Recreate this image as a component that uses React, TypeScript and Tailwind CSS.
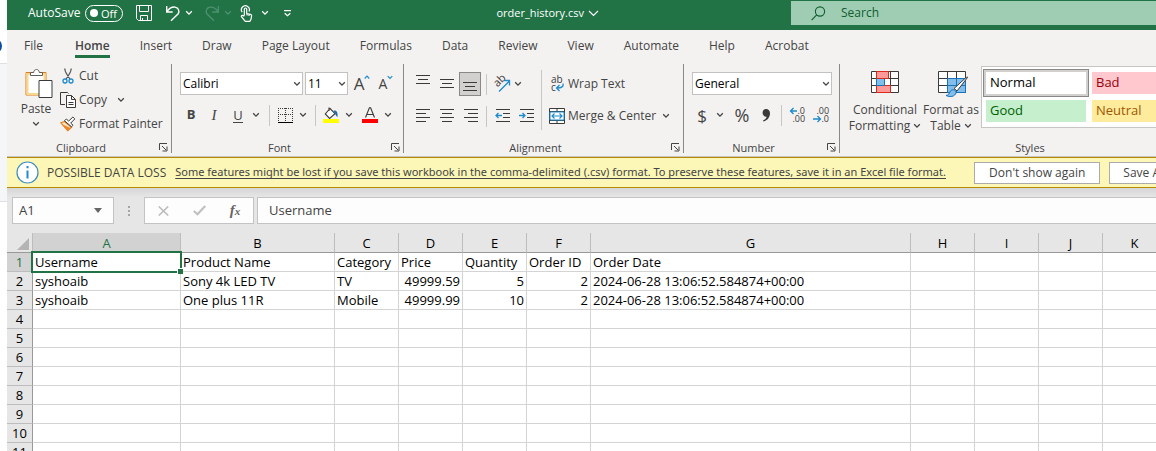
import React from "react";

const tabs = ["File", "Home", "Insert", "Draw", "Page Layout", "Formulas", "Data", "Review", "View", "Automate", "Help", "Acrobat"];

const columns = [
  { name: "A", width: "w-[148px]" },
  { name: "B", width: "w-[154px]" },
  { name: "C", width: "w-16" },
  { name: "D", width: "w-16" },
  { name: "E", width: "w-16" },
  { name: "F", width: "w-16" },
  { name: "G", width: "w-80" },
  { name: "H", width: "w-16" },
  { name: "I", width: "w-16" },
  { name: "J", width: "w-16" },
  { name: "K", width: "w-16" },
];

const data: string[][] = [
  ["Username", "Product Name", "Category", "Price", "Quantity", "Order ID", "Order Date"],
  ["syshoaib", "Sony 4k LED TV", "TV", "49999.59", "5", "2", "2024-06-28 13:06:52.584874+00:00"],
  ["syshoaib", "One plus 11R", "Mobile", "49999.99", "10", "2", "2024-06-28 13:06:52.584874+00:00"],
];

const rowNumbers = [1, 2, 3, 4, 5, 6, 7, 8, 9, 10, 11];

function Chevron({ className = "" }: { className?: string }) {
  return (
    <svg className={`shrink-0 ${className}`} width="8" height="6" viewBox="0 0 8 6" fill="none" stroke="currentColor" strokeWidth="1.3" aria-hidden="true">
      <path d="M1.2 1.3 4 4.1 6.8 1.3" />
    </svg>
  );
}

function DropButton({ label, className = "w-4" }: { label: string; className?: string }) {
  return (
    <button type="button" aria-label={label} className={`flex h-6 shrink-0 items-center justify-center ${className}`}>
      <Chevron />
    </button>
  );
}

function IconButton({ label, className = "w-6", children }: { label: string; className?: string; children: React.ReactNode }) {
  return (
    <button type="button" aria-label={label} className={`flex h-6 shrink-0 items-center justify-center ${className}`}>
      {children}
    </button>
  );
}

function Divider({ className = "h-[21px]" }: { className?: string }) {
  return <span className={`w-px shrink-0 bg-[#c8c6c4] ${className}`} />;
}

function Launcher({ label }: { label: string }) {
  return (
    <button type="button" aria-label={label} className="absolute right-[3px] bottom-px flex">
      <svg width="9" height="9" viewBox="0 0 9 9" fill="none" stroke="#444" aria-hidden="true">
        <path d="M.5 7V.5H8M3 3l4 4M8 3.5v4.5H3.5" />
      </svg>
    </button>
  );
}

function Group({ name, launcher = true, className, children }: { name: string; launcher?: boolean; className: string; children: React.ReactNode }) {
  return (
    <section aria-label={name} className={`relative flex h-[89px] shrink-0 flex-col justify-between ${launcher ? "border-r border-[#8a8886]" : ""} ${className}`}>
      {children}
      <h2 className={`text-center text-[11px] leading-[10px] ${launcher ? "pr-4" : ""}`}>{name}</h2>
      {launcher && <Launcher label={`${name} settings`} />}
    </section>
  );
}

function Picker({ label, value, className }: { label: string; value: string; className: string }) {
  return (
    <div className={`relative shrink-0 ${className}`}>
      <select aria-label={label} defaultValue={value} className="block h-[23px] w-full appearance-none border border-[#c3c2c1] bg-white pl-0.5 text-[12px] text-black">
        <option>{value}</option>
      </select>
      <Chevron className="pointer-events-none absolute top-[9px] right-0.5" />
    </div>
  );
}

function Lines({ rows, top = 0 }: { rows: [number, number][]; top?: number }) {
  return (
    <svg width="14" height="14" viewBox="0 0 14 14" stroke="#3b3a39" shapeRendering="crispEdges" aria-hidden="true">
      {rows.map(([x, w], i) => (
        <path key={i} d={`M${x} ${top + i * 4 + 0.5}h${w}`} />
      ))}
    </svg>
  );
}

function TitleBar() {
  return (
    <header className="flex h-[30px] shrink-0 items-start bg-[#217346] text-white">
      <div className="flex h-[26px] flex-1 items-center pl-[21px]">
        <span className="w-[57px] shrink-0 text-[12px]">AutoSave</span>
        <button type="button" role="switch" aria-checked="false" aria-label="AutoSave" className="flex h-[17px] w-[38px] shrink-0 items-center justify-between rounded-full border border-white pr-[5px] pl-1">
          <span className="size-2 rounded-full bg-white" />
          <span className="text-[11px] leading-none">Off</span>
        </button>
        <button type="button" aria-label="Save" className="ml-[13px]">
          <svg width="16" height="16" viewBox="0 0 16 16" fill="none" stroke="currentColor" aria-hidden="true">
            <path d="M.5.5h15v15h-13l-2-2zM3.5.5v6h9v-6M4.5 15.5v-5h7v5M6.5 13v2.5" />
          </svg>
        </button>
        <button type="button" aria-label="Undo" className="ml-[13px]">
          <svg width="16" height="17" viewBox="0 0 16 17" fill="none" stroke="currentColor" strokeWidth="1.4" aria-hidden="true">
            <path d="M1.7 1v6h6M1.9 6.8C4 3.6 6.8 1.8 9.9 2.1c3.3.4 5 3.7 3.3 6.7L6 15.8" />
          </svg>
        </button>
        <DropButton label="Undo history" className="w-4" />
        <button type="button" aria-label="Redo" className="ml-[7px] text-[#4f9170]">
          <svg width="16" height="17" viewBox="0 0 16 17" fill="none" stroke="currentColor" strokeWidth="1.3" aria-hidden="true">
            <path d="M14.3 1v6h-6M14.1 6.8C12 3.6 9.2 1.8 6.1 2.1c-3.3.4-5 3.7-3.3 6.7L10 15.8" />
          </svg>
        </button>
        <span className="text-[#4f9170]">
          <DropButton label="Redo history" className="w-4" />
        </span>
        <button type="button" aria-label="Touch mode" className="ml-1">
          <svg width="13" height="17" viewBox="0 0 13 17" fill="none" stroke="currentColor" strokeWidth="1.2" aria-hidden="true">
            <path d="M2.2 7.2A4 4 0 1 1 9 6.5M4.3 10.5V4.2a1.2 1.2 0 0 1 2.4 0v4.3l3.8.9c.8.2 1.2.8 1.1 1.5l-.6 3.4-1.2 2H5.3L1.3 11.5c0-1.3 1.3-1.7 3-.3M7 8.5v2M9 9v2" />
          </svg>
        </button>
        <DropButton label="Touch mode options" className="w-6" />
        <button type="button" aria-label="Customize toolbar" className="ml-1.5">
          <svg width="9" height="7" viewBox="0 0 9 7" fill="none" stroke="currentColor" strokeWidth="1.2" aria-hidden="true">
            <path d="M1 .7h7M1.7 3.2 4.5 5.8 7.3 3.2" />
          </svg>
        </button>
      </div>
      <button type="button" className="mr-[192px] flex h-[26px] shrink-0 items-center gap-1 text-[11px]">
        order_history.csv
        <svg width="11" height="7" viewBox="0 0 11 7" fill="none" stroke="currentColor" strokeWidth="1.2" aria-hidden="true">
          <path d="m1 1 4.5 4.5L10 1" />
        </svg>
      </button>
      <label className="mt-px flex h-6 w-[365px] shrink-0 items-center bg-[#9fcdb3] pl-5 text-[#0f5c2f]">
        <svg width="15" height="15" viewBox="0 0 15 15" fill="none" stroke="currentColor" strokeWidth="1.1" aria-hidden="true">
          <circle cx="9" cy="5.5" r="4.6" />
          <path d="M5.7 8.9.6 14.2" />
        </svg>
        <input type="search" aria-label="Search" placeholder="Search" className="ml-[15px] min-w-0 flex-1 bg-transparent text-[12px] placeholder:text-[#0f5c2f] placeholder:opacity-100" />
      </label>
    </header>
  );
}

function TabBar() {
  return (
    <nav className="flex h-[30px] shrink-0 items-start pl-0.5">
      {tabs.map((tab) => (
        <button key={tab} type="button" className={`flex h-7 shrink-0 flex-col items-center justify-end px-[15px] text-[12px] ${tab === "File" ? "mr-0.5" : ""} ${tab === "Home" ? "font-semibold" : ""}`}>
          <span className={`flex h-[25px] items-center border-b-[3px] pt-1 ${tab === "Home" ? "border-[#217346]" : "border-transparent"}`}>{tab}</span>
        </button>
      ))}
    </nav>
  );
}

function ClipboardGroup() {
  return (
    <Group name="Clipboard" className="w-[165px]">
      <div className="flex pl-[13px]">
        <button type="button" className="flex w-8 flex-col items-center pt-1 text-[12px] leading-4">
          <svg className="ml-1.5 shrink-0" width="28" height="31" viewBox="0 0 28 31" fill="none" aria-hidden="true">
            <path d="M1 4.5h20V27H1z" fill="#fff" stroke="#e07b1a" />
            <path d="M2.5 6h17v20h-17z" stroke="#f8d98b" strokeWidth="2" />
            <path d="M5.5 7.5v-3h3.2c0-4 5.6-4 5.6 0h3.2v3z" fill="#fff" stroke="#5f5e5d" />
            <path d="M14 12.5h13v17H14z" fill="#fff" stroke="#3b3a39" />
          </svg>
          <span className="mt-0.5">Paste</span>
          <Chevron className="mt-1" />
        </button>
        <div className="ml-2 flex flex-col text-[12px]">
          <button type="button" className="flex h-6 items-center gap-[3px]">
            <svg width="16" height="16" viewBox="0 0 16 16" fill="none" aria-hidden="true">
              <path d="M5 .5c-.6 2 .5 3.6 2 6l3 4.8M11 .5c.6 2-.5 3.6-2 6L6 11.3" stroke="#555" strokeWidth="1.2" />
              <circle cx="5" cy="13" r="2" stroke="#1e8bcd" strokeWidth="1.3" />
              <circle cx="11" cy="13" r="2" stroke="#1e8bcd" strokeWidth="1.3" />
            </svg>
            Cut
          </button>
          <div className="flex">
            <button type="button" className="flex h-6 items-center gap-[3px]">
              <svg width="16" height="16" viewBox="0 0 16 16" fill="none" stroke="#3b3a39" aria-hidden="true">
                <path d="M5 12.5H.5V.5h7l1 1" />
                <path d="M6.5 3.5h5l4 4v8h-9zM11.5 3.5v4h4M8.5 10.5h5M8.5 12.5h5" fill="#fff" />
              </svg>
              Copy
            </button>
            <DropButton label="Copy options" className="ml-1.5 w-4" />
          </div>
          <button type="button" className="flex h-6 items-center gap-[3px]">
            <svg width="16" height="16" viewBox="0 0 16 16" fill="none" aria-hidden="true">
              <path d="M4.5 5.5.8 6.8l7 7.8 3.7-3.3z" fill="#fbe3c0" stroke="#e07b1a" strokeWidth="1.2" />
              <path d="m2.5 8.5 5.3 6 2.7-2.5z" fill="#ed8422" />
              <path d="m4.5 4.8 7 6 1.5-1.6-2.3-2.1 4.1-4.2-1.9-1.9-4.2 4L6.3 3z" fill="#fff" stroke="#3b3a39" />
            </svg>
            Format Painter
          </button>
        </div>
      </div>
    </Group>
  );
}

function FontGroup() {
  return (
    <Group name="Font" className="w-[232px]">
      <div className="flex flex-col gap-2 pt-2 pl-2">
        <div className="flex h-[23px] items-center">
          <Picker label="Font name" value="Calibri" className="w-[123px]" />
          <Picker label="Font size" value="11" className="ml-0.5 w-[43px]" />
          <IconButton label="Increase font size" className="ml-[3px] w-[22px]">
            <span className="text-[17px] leading-none">A</span>
            <svg className="mb-3" width="6" height="5" viewBox="0 0 6 5" fill="none" stroke="#1e8bcd" strokeWidth="1.2" aria-hidden="true">
              <path d="m.7 3.5 2.3-2.3 2.3 2.3" />
            </svg>
          </IconButton>
          <IconButton label="Decrease font size" className="ml-0.5 w-[22px]">
            <span className="text-[14px] leading-none">A</span>
            <svg className="mb-3" width="6" height="5" viewBox="0 0 6 5" fill="none" stroke="#1e8bcd" strokeWidth="1.2" aria-hidden="true">
              <path d="m.7 1.2 2.3 2.3 2.3-2.3" />
            </svg>
          </IconButton>
        </div>
        <div className="flex h-6 items-center">
          <IconButton label="Bold" className="w-[22px]">
            <b className="text-[13px]">B</b>
          </IconButton>
          <IconButton label="Italic">
            <i className="font-['Liberation_Serif',serif] text-[15px]">I</i>
          </IconButton>
          <IconButton label="Underline">
            <span className="border-b border-current text-[13px] leading-[14px]">U</span>
          </IconButton>
          <DropButton label="Underline options" className="w-3" />
          <Divider className="ml-[7px] h-[21px]" />
          <IconButton label="Bottom border" className="ml-[3px] w-6">
            <svg width="15" height="15" viewBox="0 0 15 15" fill="none" stroke="#3b3a39" shapeRendering="crispEdges" aria-hidden="true">
              <path d="M0 .5h15M.5 0v13M14.5 0v13M7.5 0v13M0 6.5h15" strokeDasharray="1 1" />
              <path d="M0 14.5h15" stroke="#000" />
            </svg>
          </IconButton>
          <DropButton label="Border options" className="w-3" />
          <Divider className="ml-1.5 h-[21px]" />
          <IconButton label="Fill color" className="ml-[3px] w-6">
            <svg width="16" height="16" viewBox="0 0 16 16" fill="none" aria-hidden="true">
              <path d="m7 1.5 5 5.2-5.4 4.7L2.3 7zM6 4V.5" fill="#fff" stroke="#3b3a39" strokeWidth="1.1" />
              <path d="M10.5 3.5c3.5-.5 4.500 2 4 6.500-1.500-.5-2-3-4-6.500z" fill="#1e6fb0" />
              <path d="M0 12h16v4H0z" fill="#ff0" />
            </svg>
          </IconButton>
          <DropButton label="Fill color options" className="w-3" />
          <IconButton label="Font color" className="ml-[3px] w-6">
            <svg width="16" height="16" viewBox="0 0 16 16" fill="none" aria-hidden="true">
              <path d="M3.5 10.5 7.4.8h1.2l3.9 9.7M5 7.5h6" stroke="#3b3a39" strokeWidth="1.1" />
              <path d="M0 12h16v4H0z" fill="#f00" />
            </svg>
          </IconButton>
          <DropButton label="Font color options" className="w-3" />
        </div>
      </div>
    </Group>
  );
}

function AlignmentGroup() {
  return (
    <Group name="Alignment" className="w-[280px]">
      <div className="flex pt-2 pl-[7px]">
        <div className="flex shrink-0 flex-col gap-2">
          <div className="flex h-6 items-center">
            <IconButton label="Top align">
              <svg width="14" height="22" viewBox="0 0 14 22" stroke="#3b3a39" shapeRendering="crispEdges" aria-hidden="true">
                <path d="M0 2.5h14M2 6.5h10M0 10.5h14" />
              </svg>
            </IconButton>
            <IconButton label="Middle align">
              <Lines rows={[[0, 14], [2, 10], [0, 14]]} top={2} />
            </IconButton>
            <button type="button" aria-label="Bottom align" aria-pressed="true" className="flex h-6 w-[22px] items-end justify-center border border-[#8a8886] bg-[#d2d0ce] pb-px">
              <Lines rows={[[0, 14], [2, 10], [0, 14]]} top={2} />
            </button>
            <Divider className="ml-[5px] h-[21px]" />
            <IconButton label="Orientation" className="ml-[5px] w-5">
              <svg className="overflow-visible" width="18" height="17" viewBox="0 0 18 17" fill="none" aria-hidden="true">
                <path d="m6 15.5 10-10M11.5 4.5h5v5" stroke="#1e8bcd" strokeWidth="1.3" />
                <text x="0" y="0" transform="translate(4.5 11.5) rotate(-45)" fontSize="11" fill="#3b3a39">ab</text>
              </svg>
            </IconButton>
            <DropButton label="Orientation options" className="w-3" />
          </div>
          <div className="flex h-6 items-center">
            <IconButton label="Align left">
              <Lines rows={[[0, 14], [0, 10], [0, 14], [0, 10]]} />
            </IconButton>
            <IconButton label="Center">
              <Lines rows={[[0, 14], [2, 10], [0, 14], [2, 10]]} />
            </IconButton>
            <IconButton label="Align right">
              <Lines rows={[[0, 14], [4, 10], [0, 14], [4, 10]]} />
            </IconButton>
            <Divider className="ml-[3px] h-[21px]" />
            <IconButton label="Decrease indent" className="ml-[3px] w-6">
              <svg width="15" height="14" viewBox="0 0 15 14" fill="none" stroke="#3b3a39" aria-hidden="true">
                <path d="M1 .5h14M8 4.5h7M8 8.5h7M1 12.5h14" />
                <path d="M7 6.5H1M3.5 4 1 6.5 3.5 9" stroke="#1e8bcd" strokeWidth="1.3" />
              </svg>
            </IconButton>
            <IconButton label="Increase indent">
              <svg width="15" height="14" viewBox="0 0 15 14" fill="none" stroke="#3b3a39" aria-hidden="true">
                <path d="M1 .5h14M8 4.5h7M8 8.5h7M1 12.5h14" />
                <path d="M0 6.5h6M3.5 4 6 6.5 3.5 9" stroke="#1e8bcd" strokeWidth="1.3" />
              </svg>
            </IconButton>
          </div>
        </div>
        <Divider className="-mt-0.5 ml-[3px] h-[60px]" />
        <div className="ml-[7px] flex flex-1 flex-col gap-2 text-[12px]">
          <button type="button" className="flex h-6 items-center gap-[3px] whitespace-nowrap">
            <svg className="shrink-0 overflow-visible" width="16" height="18" viewBox="0 0 16 18" fill="none" aria-hidden="true">
              <text x="2" y="8" fontSize="10" fill="#3b3a39">ab</text>
              <text x="2" y="16" fontSize="10" fill="#3b3a39">c</text>
              <path d="M14 8.5c.8 3-1.2 4.5-6 4.5M10.5 10 7.5 13l3 3" stroke="#1e8bcd" strokeWidth="1.3" />
            </svg>
            Wrap Text
          </button>
          <div className="flex">
            <button type="button" className="flex h-6 items-center gap-[3px] whitespace-nowrap">
              <svg className="shrink-0" width="16" height="16" viewBox="0 0 16 16" fill="none" aria-hidden="true">
                <path d="M.5.5h15v15H.5zM.5 3.5h15M.5 12.5h15M8 .5v3M8 12.5v3" fill="#fff" stroke="#3b3a39" />
                <path d="M1 4h14v8H1z" fill="#fff" stroke="#1e8bcd" />
                <path d="M3 8h10M5.5 5.5 3 8l2.5 2.5M10.5 5.5 13 8l-2.5 2.5" stroke="#1e8bcd" strokeWidth="1.2" />
              </svg>
              Merge &amp; Center
            </button>
            <DropButton label="Merge options" className="ml-0.5 w-4" />
          </div>
        </div>
      </div>
    </Group>
  );
}

function NumberGroup() {
  return (
    <Group name="Number" className="w-[156px]">
      <div className="flex flex-col gap-2 pt-2 pl-2">
        <Picker label="Number format" value="General" className="w-[140px]" />
        <div className="flex h-6 items-center">
          <IconButton label="Accounting format" className="w-5">
            <span className="text-[17px] leading-none">$</span>
          </IconButton>
          <DropButton label="Accounting options" className="w-4" />
          <IconButton label="Percent style" className="ml-[3px] w-[22px]">
            <span className="text-[18px] leading-none">%</span>
          </IconButton>
          <IconButton label="Comma style" className="ml-0.5 w-[22px]">
            <svg width="9" height="13" viewBox="0 0 9 13" fill="#3b3a39" aria-hidden="true">
              <path d="M4 0c2.5 0 4 1.6 4 4.3C8 8.3 5.5 11.5 1.5 12.5l-.5-1c2-.8 3.3-2 3.6-3.8C2.4 8 .6 6.4.6 3.8.6 1.6 2 0 4 0z" />
            </svg>
          </IconButton>
          <Divider className="ml-1 h-[21px]" />
          <IconButton label="Increase decimal" className="ml-[3px] w-6">
            <svg className="overflow-visible" width="17" height="16" viewBox="0 0 17 16" fill="none" aria-hidden="true">
              <path d="M8 4H1.5M4.5 1l-3 3 3 3" stroke="#1e8bcd" strokeWidth="1.3" />
              <text x="8.5" y="7" fontSize="9" fill="#3b3a39">.0</text>
              <text x="3.5" y="15" fontSize="9" fill="#3b3a39">.00</text>
            </svg>
          </IconButton>
          <IconButton label="Decrease decimal">
            <svg className="overflow-visible" width="17" height="16" viewBox="0 0 17 16" fill="none" aria-hidden="true">
              <path d="M0 12h7.5M4.5 9l3 3-3 3" stroke="#1e8bcd" strokeWidth="1.3" />
              <text x="3.5" y="7" fontSize="9" fill="#3b3a39">.00</text>
              <text x="8.5" y="15" fontSize="9" fill="#3b3a39">.0</text>
            </svg>
          </IconButton>
        </div>
      </div>
    </Group>
  );
}

function StylesGroup() {
  return (
    <Group name="Styles" launcher={false} className="w-[380px]">
      <div className="flex text-[12px]">
        <button type="button" className="ml-2 flex w-[74px] flex-col items-center pt-[7px] leading-4">
          <svg className="shrink-0" width="28" height="22" viewBox="0 0 28 22" fill="none" aria-hidden="true">
            <path d="M.5.5h27v21H.5z" fill="#fff" />
            <path d="M5.5 7.5h8v7h-8z" fill="#83bdea" />
            <path d="M.5.5h27v21H.5zM.5 7.5h27M.5 14.5h27M5.5.5v21M13.5.5v21M19.5.5v21" stroke="#3b3a39" />
            <path d="M5.5.5h12v7h-12zM5.5 14.5h14v7h-14z" fill="#ff9a98" stroke="#d92a1c" />
            <path d="M5.5 7.5v7h8v-7" stroke="#1a73b8" />
          </svg>
          <span className="mt-[9px] whitespace-nowrap">Conditional</span>
          <span className="flex items-center gap-[3px] whitespace-nowrap">Formatting <Chevron /></span>
        </button>
        <button type="button" className="flex w-[58px] flex-col items-center pt-[7px] leading-4">
          <svg className="ml-1 shrink-0" width="31" height="27" viewBox="0 0 31 27" fill="none" aria-hidden="true">
            <path d="M.5.5h27v21H.5z" fill="#fff" />
            <path d="M9.5 7.5h18v14h-18z" fill="#83bdea" />
            <path d="M.5.5h27v21H.5zM.5 7.5h9M.5 14.5h9M9.5.5v7M18.5.5v7" stroke="#3b3a39" />
            <path d="M9.5 7.5h18v14h-18zM9.5 14.5h18M18.5 7.5v14" stroke="#1a73b8" />
            <path d="M29.5 6.5 19 20l-3-2.5L27 7.5c1.2-1.2 3.2-2 2.5-1z" fill="#fff" stroke="#3b3a39" />
            <path d="M8 24.5c3-.5 3-2 4.5-4.5 1.5-2 5-1.5 5.5.8.5 3.2-4 6.5-10 3.7z" fill="#83bdea" stroke="#1a73b8" />
          </svg>
          <span className="mt-1 whitespace-nowrap">Format as</span>
          <span className="flex items-center gap-[3px] whitespace-nowrap">Table <Chevron /></span>
        </button>
        <div className="mt-0.5 ml-px grid h-[62px] grid-cols-[106px_106px_1fr] content-start gap-y-[3px] border border-[#c8c6c4] bg-white pt-0.5 pl-px text-[13px]">
          <button type="button" className="h-7 border border-[#8a8886] bg-white text-left text-black">
            <span className="flex h-full items-center border-2 border-[#d2d0ce] pl-1">Normal</span>
          </button>
          <button type="button" className="mt-[3px] ml-[3px] h-[22px] w-[100px] bg-[#ffc7ce] pl-1 text-left text-[#9c0006]">Bad</button>
          <span />
          <button type="button" className="ml-[3px] h-[22px] w-[100px] bg-[#c6efce] pl-1 text-left text-[#006100]">Good</button>
          <button type="button" className="ml-[3px] h-[22px] w-[100px] bg-[#ffeb9c] pl-1 text-left text-[#9c5700]">Neutral</button>
        </div>
      </div>
    </Group>
  );
}

function MessageBar() {
  return (
    <div role="alert" className="flex h-[31px] shrink-0 items-center border-y border-[#b58b00] bg-[#fcf7b6] pl-[9px] text-[12px] whitespace-nowrap">
      <svg className="shrink-0" width="23" height="23" viewBox="0 0 23 23" fill="none" aria-hidden="true">
        <circle cx="11.5" cy="11.5" r="10.5" fill="#fff" stroke="#3f8cbf" strokeWidth="1.2" />
        <path d="M11.5 9.5v8M11.5 5v2.3" stroke="#1e8bcd" strokeWidth="2" />
      </svg>
      <strong className="ml-2 shrink-0 font-normal">POSSIBLE DATA LOSS</strong>
      <a href="#formats" className="ml-[9px] min-w-[787px] shrink-0 font-['Noto_Sans',sans-serif] text-[11px] underline underline-offset-2">
        Some features might be lost if you save this workbook in the comma-delimited (.csv) format. To preserve these features, save it in an Excel file format.
      </a>
      <button type="button" className="ml-3 h-[22px] w-[126px] shrink-0 border border-[#ababab] bg-white">Don't show again</button>
      <button type="button" className="ml-[9px] h-[22px] w-[80px] shrink-0 border border-[#ababab] bg-white">Save As...</button>
    </div>
  );
}

function FormulaBar() {
  return (
    <div className="flex h-[27px] shrink-0 pl-[5px] text-[13px]">
      <div className="flex w-[102px] shrink-0 items-center border border-[#c3c3c3] bg-[#fdfdfd]">
        <input aria-label="Name box" defaultValue="A1" className="w-0 flex-1 bg-transparent pl-1.5" />
        <button type="button" aria-label="Named ranges" className="mr-[11px]">
          <svg width="8" height="5" viewBox="0 0 8 5" fill="#666" aria-hidden="true">
            <path d="M0 0h8L4 5z" />
          </svg>
        </button>
      </div>
      <div className="flex w-[30px] shrink-0 items-center justify-center">
        <svg width="2" height="12" viewBox="0 0 2 12" fill="#a6a6a6" aria-hidden="true">
          <path d="M0 1h2v2H0zM0 5h2v2H0zM0 9h2v2H0z" />
        </svg>
      </div>
      <div className="flex w-[110px] shrink-0 items-center border border-[#c3c3c3] bg-[#fdfdfd]">
        <IconButton label="Cancel" className="w-9">
          <svg width="11" height="10" viewBox="0 0 11 10" fill="none" stroke="#bdbdbd" strokeWidth="1.6" aria-hidden="true">
            <path d="m.8.5 9.4 9M10.2.5.8 9.5" />
          </svg>
        </IconButton>
        <IconButton label="Enter" className="w-9">
          <svg width="13" height="11" viewBox="0 0 13 11" fill="none" stroke="#c0c0c0" strokeWidth="2.2" aria-hidden="true">
            <path d="M.8 6 4.5 9.3 12.2 1" />
          </svg>
        </IconButton>
        <IconButton label="Insert function" className="w-9">
          <span className="font-['Liberation_Serif',serif] text-[15px] leading-none font-bold text-[#666] italic">
            f<span className="text-[11px]">x</span>
          </span>
        </IconButton>
      </div>
      <input aria-label="Formula" defaultValue="Username" className="ml-[3px] min-w-0 flex-1 border border-r-0 border-[#c3c3c3] bg-[#fdfdfd] pl-[11px]" />
    </div>
  );
}

function Sheet() {
  return (
    <div className="mt-[9px] min-h-0 flex-1 overflow-hidden">
      <table className="w-max table-fixed border-separate border-spacing-0 text-[13px] leading-[18px] text-black">
        <thead>
          <tr className="h-5">
            <th scope="col" aria-label="Select all" className="w-[26px] border-r border-b border-r-[#bdbdbd] border-b-[#999] bg-[#e6e6e6] p-0">
              <svg className="mt-0.5 ml-2.5" width="12" height="12" viewBox="0 0 12 12" fill="#b4b4b4" aria-hidden="true">
                <path d="M12 0v12H0z" />
              </svg>
            </th>
            {columns.map((c) => (
              <th key={c.name} scope="col" className={`${c.width} border-r border-b border-r-[#bdbdbd] border-b-[#999] p-0 font-normal ${c.name === "A" ? "bg-[#d2d2d2] text-[#217346]" : "bg-[#e6e6e6]"}`}>
                {c.name}
              </th>
            ))}
          </tr>
        </thead>
        <tbody>
          {rowNumbers.map((n, r) => (
            <tr key={n} className="h-[19px]">
              <th scope="row" className={`border-r border-b border-r-[#999] border-b-[#bdbdbd] p-0 font-normal ${n === 1 ? "bg-[#d2d2d2] text-[#217346]" : "bg-[#e6e6e6]"}`}>
                {n}
              </th>
              {columns.map((c, i) => (
                <td key={c.name} className={`relative border-r border-b border-[#d4d4d4] bg-white px-0.5 py-0 whitespace-nowrap ${r > 0 && i > 2 && i < 6 ? "text-right" : "text-left"}`}>
                  {data[r]?.[i]}
                  {r === 0 && i === 0 && (
                    <span className="pointer-events-none absolute -inset-0.5 z-10 border-2 border-[#217346]">
                      <span className="absolute -right-[3px] -bottom-[3px] size-[6px] border-t border-l border-white bg-[#217346]" />
                    </span>
                  )}
                </td>
              ))}
            </tr>
          ))}
        </tbody>
      </table>
    </div>
  );
}

export default function App() {
  return (
    <div className="flex h-screen overflow-hidden bg-[#e6e6e6] font-['Open_Sans','Noto_Sans',sans-serif] text-[#444]">
      <aside className="flex w-[7px] shrink-0 flex-col overflow-hidden bg-white">
        <div className="flex h-16 shrink-0 items-end justify-end border-b border-[#dcdfe3] pr-[5px] pb-[9px]">
          <span className="size-4 shrink-0 rounded-full bg-[#0b4da2]" />
        </div>
        <div className="h-[138px] shrink-0 border-b border-[#dcdfe3] bg-[#f5f6f8]" />
      </aside>
      <main className="flex min-w-0 flex-1 flex-col">
        <TitleBar />
        <div className="shrink-0 overflow-hidden border-b border-[#c8c6c4] bg-[#f3f2f1]">
          <TabBar />
          <div className="flex h-24 pt-1">
            <ClipboardGroup />
            <FontGroup />
            <AlignmentGroup />
            <NumberGroup />
            <StylesGroup />
          </div>
        </div>
        <MessageBar />
        <div className="h-[9px] shrink-0 bg-linear-to-b from-[#d6d6d6] to-[#e6e6e6]" />
        <FormulaBar />
        <Sheet />
      </main>
    </div>
  );
}
